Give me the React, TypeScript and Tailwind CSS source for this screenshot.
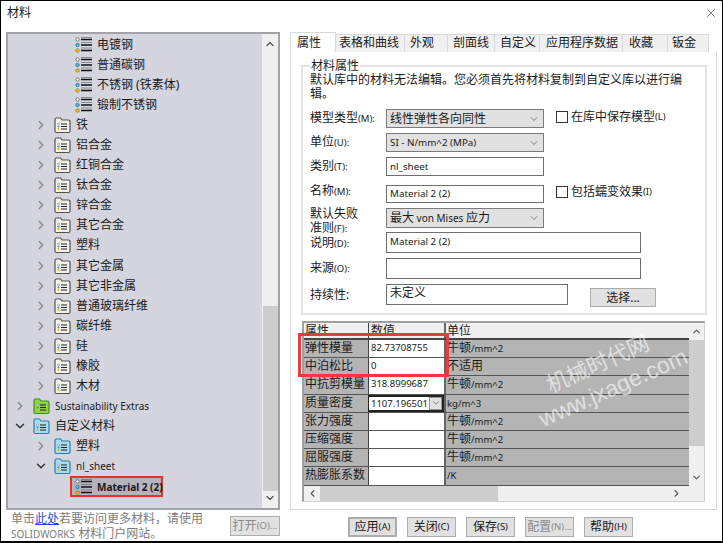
import { ReactNode } from "react";
import { ChevronDown, ChevronRight, ChevronUp, ChevronLeft, X } from "lucide-react";

const folderColors = {
  gray: { fill: "#f4f2ec", stroke: "#55524c" },
  green: { fill: "#8fd14f", stroke: "#3f8f1f" },
  blue: { fill: "#a8dcef", stroke: "#2b7fa8" },
};

function ItemIcon() {
  return (
    <svg width="18" height="16" viewBox="0 0 18 16" className="shrink-0">
      <circle cx="2.5" cy="2.5" r="1.7" fill="#fff" stroke="#777" />
      <circle cx="2.5" cy="8" r="1.7" fill="#5cb8dc" stroke="#3c86a8" />
      <circle cx="2.5" cy="13.5" r="1.7" fill="#f2b824" stroke="#b88a10" />
      <path d="M6 2.5h11M6 8h11M6 13.5h11" stroke="#111" strokeWidth="1.5" />
      <path d="M6 .5h11M6 5.500h11M6 11h11" stroke="#777" strokeWidth="0.8" />
    </svg>
  );
}

function FolderIcon({ color }: { color: keyof typeof folderColors }) {
  const c = folderColors[color];
  return (
    <svg width="17" height="18" viewBox="0 0 17 18" className="shrink-0">
      <path
        d="M1 3.5C1 2.500 1.500 2 2.500 2h4l1.500 2h6.500c1 0 1.500.5 1.500 1.500v9.500c0 1-.5 1.500-1.500 1.500h-12c-1 0-1.500-.5-1.500-1.500z"
        fill={c.fill}
        stroke={c.stroke}
        strokeWidth="1.2"
      />
      <circle cx="4.500" cy="8" r="1" fill="#fff" stroke="#777" strokeWidth="0.5" />
      <circle cx="4.500" cy="10.500" r="1" fill="#3c96c0" />
      <circle cx="4.500" cy="13" r="1" fill="#e8ae1c" />
      <path d="M7 8h6M7 10.500h6M7 13h6" stroke="#222" strokeWidth="1" />
    </svg>
  );
}

type TreeRowProps = {
  label: ReactNode;
  depth: 0 | 1;
  open?: boolean;
  color?: keyof typeof folderColors;
};

function TreeFolder({ label, depth, open, color = "gray" }: TreeRowProps) {
  return (
    <div className={`flex h-[20.06px] items-center ${depth === 0 ? "pl-[5px]" : "pl-[26px]"}`}>
      {open ? (
        <ChevronDown size={14} strokeWidth={2.5} className="mr-[5px] text-[#333]" />
      ) : (
        <ChevronRight size={14} strokeWidth={2.5} className="mr-[5px] text-[#888]" />
      )}
      <div className="mr-[5px] flex w-[18px] justify-center">
        <FolderIcon color={color} />
      </div>
      <span className="whitespace-nowrap">{label}</span>
    </div>
  );
}

function TreeItem({ label }: { label: string }) {
  return (
    <div className="flex h-[20.06px] items-center pl-[67px]">
      <ItemIcon />
      <span className="ml-[4px] whitespace-nowrap">{label}</span>
    </div>
  );
}

function Select({ value, className }: { value: ReactNode; className: string }) {
  return (
    <div className={`flex items-center justify-between border border-[#7a7a7a] bg-[#e1e1e1] pl-[3px] pr-[3px] ${className}`}>
      <span>{value}</span>
      <ChevronDown size={12} strokeWidth={1.2} className="text-[#444]" />
    </div>
  );
}

function Label({ text, keyHint }: { text: ReactNode; keyHint: string }) {
  return (
    <div className="w-[76px] shrink-0 leading-[14px]">
      {text}
      <span className="text-[9.5px]">{keyHint}</span>
    </div>
  );
}

function Input({ value, className }: { value?: string; className: string }) {
  return (
    <div className={`flex items-center border border-[#6e6e6e] bg-white pl-[3px] ${className}`}>
      {value}
    </div>
  );
}

function Check({ label, keyHint }: { label: string; keyHint: string }) {
  return (
    <div className="-mt-[4px] ml-[12px] flex items-center">
      <div className="mr-[3px] size-[12px] border border-[#333] bg-white" />
      {label}
      <span className="text-[9.5px]">{keyHint}</span>
    </div>
  );
}

function Tab({ label, className }: { label: string; className: string }) {
  return (
    <div className={`flex h-[18px] items-center border border-b-0 border-l-0 border-[#d9d9d9] bg-[#f0f0f0] pb-[1px] ${className}`}>
      {label}
    </div>
  );
}

function Button({ children, className }: { children: ReactNode; className?: string }) {
  return (
    <div className={`flex h-[20px] w-[49px] items-center justify-center border border-[#adadad] bg-[#e1e1e1] ${className ?? ""}`}>
      {children}
    </div>
  );
}

function Hint({ label, keyHint, className }: { label: string; keyHint: string; className?: string }) {
  return (
    <Button className={className}>
      {label}
      <span className="text-[9.5px]">{keyHint}</span>
    </Button>
  );
}

const tableRows: { name: string; value?: string; cjk?: string; latin?: string; combo?: boolean }[] = [
  { name: "弹性模量", value: "82.73708755", cjk: "牛顿", latin: "/mm^2" },
  { name: "中泊松比", value: "0", cjk: "不适用" },
  { name: "中抗剪模量", value: "318.8999687", cjk: "牛顿", latin: "/mm^2" },
  { name: "质量密度", value: "1107.196501", latin: "kg/m^3", combo: true },
  { name: "张力强度", cjk: "牛顿", latin: "/mm^2" },
  { name: "压缩强度", cjk: "牛顿", latin: "/mm^2" },
  { name: "屈服强度", cjk: "牛顿", latin: "/mm^2" },
  { name: "热膨胀系数", latin: "/K" },
];

function PropertyTable() {
  return (
    <div className="relative ml-[1px] mt-[6px] flex h-[181px] w-[403px] flex-col border-2 border-b border-r border-[#a0a0a0] border-r-[#d0d0d0] border-b-[#d0d0d0]">
      <div className="flex min-h-0 flex-1">
        <div className="w-[386px] leading-[15px]">
          <div className="flex h-[17px] border-b-2 border-[#444] bg-[#f0f0f0]">
            <div className="w-[64px] pl-[1px]">属性</div>
            <div className="w-[76px] border-l border-[#444] pl-[2px]">数值</div>
            <div className="flex-1 border-l-2 border-[#666] pl-[1px]">单位</div>
          </div>
          {tableRows.map((row) => (
            <div key={row.name} className="flex h-[18.2px] border-b border-[#555]">
              <div className="w-[64px] bg-[#b4b4b4] pl-[1px] whitespace-nowrap">{row.name}</div>
              {row.combo ? (
                <div className="flex w-[76px] items-center justify-between border-2 border-l border-[#222] bg-white pl-[2px]">
                  <span className="text-[9.5px]">{row.value}</span>
                  <span className="flex h-full w-[13px] items-center justify-center border border-[#999] bg-[#e1e1e1]">
                    <ChevronDown size={10} strokeWidth={1.2} />
                  </span>
                </div>
              ) : (
                <div className="w-[76px] border-l border-[#444] bg-white pl-[2px] text-[9.5px]">{row.value}</div>
              )}
              <div className="flex-1 border-l-2 border-[#666] bg-[#b4b4b4] pl-[1px]">
                {row.cjk}
                <span className="text-[9.5px]">{row.latin}</span>
              </div>
            </div>
          ))}
        </div>
        <div className="flex w-[15px] flex-col items-center justify-between bg-[#f0f0f0] py-[3px]">
          <ChevronUp size={11} strokeWidth={2.5} className="text-[#555]" />
          <div className="absolute right-0 top-[17px] h-[106px] w-[15px] bg-[#cdcdcd]" />
          <ChevronDown size={11} strokeWidth={2.5} className="text-[#555]" />
        </div>
      </div>
      <div className="flex h-[15px] items-center justify-between bg-[#f0f0f0] px-[3px]">
        <ChevronLeft size={11} strokeWidth={2.5} className="text-[#555]" />
        <div className="absolute left-[16px] top-[163px] h-[15px] w-[178px] bg-[#cdcdcd]" />
        <ChevronRight size={11} strokeWidth={2.5} className="mr-[19px] text-[#555]" />
      </div>
    </div>
  );
}

export default function App() {
  return (
    <div className="relative h-[543px] w-[723px] overflow-hidden border border-b-2 border-black bg-white font-['Noto_Sans','Noto_Sans_CJK_SC',sans-serif] text-[12px] leading-[16px] text-[#1a1a1a]">
      <div className="flex h-[31px] items-center justify-between pb-[7px] pl-[6px] pr-[4px]">
        <span>材料</span>
        <X size={14} strokeWidth={1} className="text-[#222]" />
      </div>

      <div className="flex">
        {/* left: tree + hint text */}
        <div className="ml-[5px] w-[274px]">
          <div className="flex h-[478px] border-2 border-[#a2a2aa] bg-[#d5d5e0]">
            <div className="flex-1 pt-[1px]">
              <TreeItem label="电镀钢" />
              <TreeItem label="普通碳钢" />
              <TreeItem label="不锈钢 (铁素体)" />
              <TreeItem label="锻制不锈钢" />
              <TreeFolder depth={1} label="铁" />
              <TreeFolder depth={1} label="铝合金" />
              <TreeFolder depth={1} label="红铜合金" />
              <TreeFolder depth={1} label="钛合金" />
              <TreeFolder depth={1} label="锌合金" />
              <TreeFolder depth={1} label="其它合金" />
              <TreeFolder depth={1} label="塑料" />
              <TreeFolder depth={1} label="其它金属" />
              <TreeFolder depth={1} label="其它非金属" />
              <TreeFolder depth={1} label="普通玻璃纤维" />
              <TreeFolder depth={1} label="碳纤维" />
              <TreeFolder depth={1} label="硅" />
              <TreeFolder depth={1} label="橡胶" />
              <TreeFolder depth={1} label="木材" />
              <TreeFolder depth={0} label={<span className="text-[10px]">Sustainability Extras</span>} color="green" />
              <TreeFolder depth={0} label="自定义材料" color="blue" open />
              <TreeFolder depth={1} label="塑料" color="blue" />
              <TreeFolder depth={1} label={<span className="text-[10px]">nl_sheet</span>} color="blue" open />
              <div className="ml-[62px] flex h-[21px] w-[93px] items-center border-2 border-[#e8302c] bg-[#b4b4bc] pl-[3px] font-bold">
                <ItemIcon />
                <span className="ml-[4px] text-[10px] whitespace-nowrap">Material 2 (2)</span>
              </div>
            </div>
            <div className="flex w-[16px] flex-col items-center justify-between bg-[#f0f0f0] py-[4px]">
              <ChevronUp size={12} strokeWidth={2.5} className="text-[#555]" />
              <div className="mt-[255px] h-[185px] w-[15px] bg-[#cdcdcd]" />
              <ChevronDown size={12} strokeWidth={2.5} className="text-[#555]" />
            </div>
          </div>
          <div className="flex items-start justify-between pl-[5px] pt-[1px] text-[#7d7d7d]">
            <div className="leading-[15px]">
              <div>
                单击<span className="text-[#1f4fd8] underline">此处</span>若要访问更多材料{"\uFF0C"}请使用
              </div>
              <div>
                <span className="text-[10px]">SOLIDWORKS</span> 材料门户网站。
              </div>
            </div>
            <Button className="mt-[5px] w-[50px] bg-[#cccccc] text-[#8a8a8a]">
              打开<span className="text-[9.5px]">(O)...</span>
            </Button>
          </div>
        </div>

        {/* right: tabs, properties and footer buttons */}
        <div className="ml-[10px] w-[427px]">
          <div className="flex items-end">
            <div className="flex h-[20px] w-[46px] items-center border border-b-0 border-[#d9d9d9] bg-white pl-[6px]">属性</div>
            <Tab label="表格和曲线" className="w-[69px] pl-[3px]" />
            <Tab label="外观" className="w-[43px] pl-[5px]" />
            <Tab label="剖面线" className="w-[47px] pl-[5px]" />
            <Tab label="自定义" className="w-[45px] pl-[5px]" />
            <Tab label="应用程序数据" className="w-[83px] pl-[6px]" />
            <Tab label="收藏" className="w-[45px] pl-[6px]" />
            <Tab label="钣金" className="w-[41px] pl-[4px]" />
          </div>
          <div className="h-[458px] w-[427px] border border-t-0 border-[#d9d9d9] pl-[10px] pt-[13px]">
            <div className="relative h-[250px] w-[406px] border-2 border-[#e4e4e4] pl-[7px]">
              <div className="absolute left-[7px] top-[-8px] bg-white px-[1px] leading-[14px]">材料属性</div>
              <div className="w-[375px] pt-[6px] leading-[14px]">
                默认库中的材料无法编辑。您必须首先将材料复制到自定义库以进行编辑。
              </div>
              <div className="mt-[8px] flex items-center">
                <Label text="模型类型" keyHint="(M):" />
                <Select value="线性弹性各向同性" className="h-[19px] w-[158px]" />
                <Check label="在库中保存模型" keyHint="(L)" />
              </div>
              <div className="mt-[5px] flex items-center">
                <Label text="单位" keyHint="(U):" />
                <Select value="SI - N/mm^2 (MPa)" className="h-[19px] w-[158px] text-[9.8px]" />
              </div>
              <div className="mt-[5px] flex items-center">
                <Label text="类别" keyHint="(T):" />
                <Input value="nl_sheet" className="h-[19px] w-[158px] text-[9.8px]" />
              </div>
              <div className="mt-[9px] flex h-[18px] items-center">
                <div className="-mt-[6px]">
                  <Label text="名称" keyHint="(M):" />
                </div>
                <Input value="Material 2 (2)" className="h-[18px] w-[158px] text-[9.8px]" />
                <Check label="包括蠕变效果" keyHint="(I)" />
              </div>
              <div className="mt-[5px] flex h-[20px] items-start">
                <div className="-mt-[1px]">
                  <Label
                    text={
                      <>
                        默认失败
                        <br />
                        准则
                      </>
                    }
                    keyHint="(F):"
                  />
                </div>
                <Select
                  value={
                    <>
                      最大<span className="text-[10px]"> von Mises </span>应力
                    </>
                  }
                  className="h-[20px] w-[158px]"
                />
              </div>
              <div className="mt-[4px] flex items-center">
                <div className="mt-[2px]">
                  <Label text="说明" keyHint="(D):" />
                </div>
                <Input value="Material 2 (2)" className="h-[21px] w-[255px] items-start pt-[1px] text-[9.8px]" />
              </div>
              <div className="mt-[5px] flex items-center">
                <Label text="来源" keyHint="(O):" />
                <Input className="h-[21px] w-[255px]" />
              </div>
              <div className="mt-[5px] flex items-start">
                <div className="mt-[4px]">
                  <Label text="持续性:" keyHint="" />
                </div>
                <Input value="未定义" className="h-[21px] w-[182px] items-start" />
                <div className="ml-[22px] mt-[4px] flex h-[19px] w-[66px] items-center justify-center border border-[#adadad] bg-[#e1e1e1]">选择...</div>
              </div>
            </div>
            <PropertyTable />
          </div>
          <div className="ml-[58px] flex gap-[10px] pt-[7px]">
            <Hint label="应用" keyHint="(A)" className="border-2 border-[#0078d7]" />
            <Hint label="关闭" keyHint="(C)" />
            <Hint label="保存" keyHint="(S)" />
            <Hint label="配置" keyHint="(N)..." className="bg-[#cccccc] text-[#8a8a8a]" />
            <Hint label="帮助" keyHint="(H)" />
          </div>
        </div>
      </div>

      {/* annotation and watermark lie over the table */}
      <div className="absolute left-[297px] top-[332px] h-[44px] w-[151px] border-[3px] border-[#ee3a3a]" />
      <div className="absolute left-[546px] top-[372px] origin-left -rotate-[24deg] text-[22px] leading-[24px] whitespace-nowrap text-white/60">
        机械时代网
      </div>
      <div className="absolute left-[539px] top-[407px] origin-left -rotate-[24deg] font-['Liberation_Sans',sans-serif] text-[23px] leading-[24px] whitespace-nowrap text-white/60">
        www.jxage.com
      </div>
    </div>
  );
}
